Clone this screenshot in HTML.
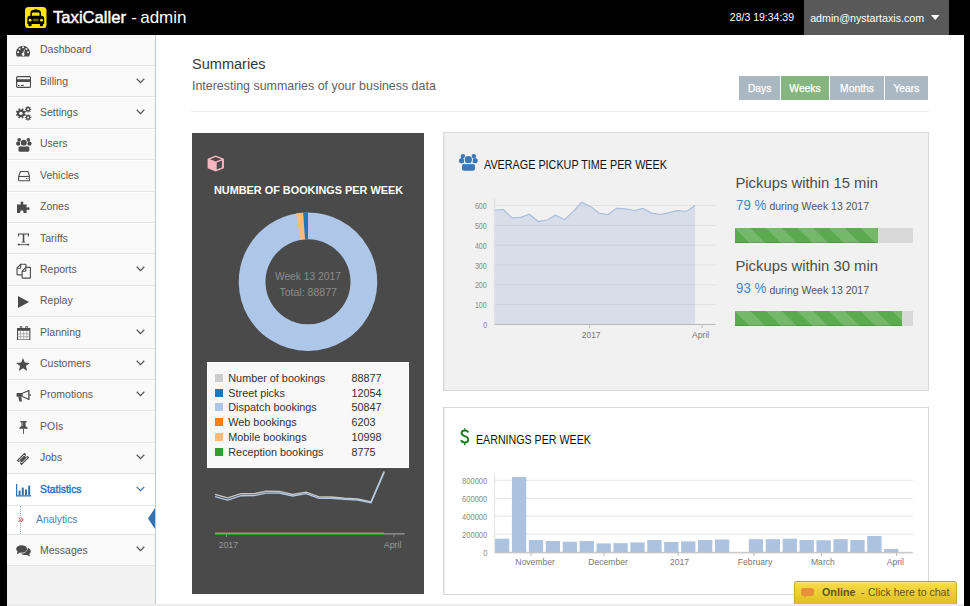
<!DOCTYPE html>
<html><head><meta charset="utf-8"><style>
html,body{margin:0;padding:0;}
body{width:970px;height:606px;overflow:hidden;position:relative;background:#000;font-family:"Liberation Sans",sans-serif;}
.t{position:absolute;line-height:1;white-space:nowrap;}
.r{position:absolute;display:block;}
</style></head><body>
<div class="r" style="left:0.00px;top:0.00px;width:970.00px;height:35.00px;background:#000;"></div>
<svg class="r" style="left:25.30px;top:6.50px;" width="21.50" height="21.40" viewBox="0 0 21.5 21.4"><rect x="0" y="0" width="21.5" height="21.4" rx="3.6" fill="#ffe800"/><path d="M5.4 9.2V6.2C5.4 3.8 7 2.9 9.4 2.8C9.8 2.2 11.7 2.2 12.1 2.8C14.5 2.9 16 3.8 16 6.2V9.2Z" fill="#000"/><path d="M6.9 8.9V6.6C6.9 5.8 7.6 5.4 8.4 5.4H13C13.8 5.4 14.5 5.8 14.5 6.6V8.9Z" fill="#ffe800"/><path d="M2.3 16.9V12C2.3 10 3.2 8.8 5 8.8H16.5C18.3 8.8 19.2 10 19.2 12V16.9Z" fill="#000"/><rect x="3.4" y="15.5" width="3.2" height="3.7" rx="1" fill="#000"/><rect x="14.9" y="15.5" width="3.2" height="3.7" rx="1" fill="#000"/><circle cx="5.1" cy="13.2" r="1.4" fill="#ffe800"/><circle cx="16.5" cy="13.2" r="1.4" fill="#ffe800"/><rect x="7.8" y="11.8" width="5.8" height="2.5" fill="#6e6200"/></svg>
<div class="t" style="left:53.30px;top:9.00px;font-size:17.00px;color:#fff;transform:scaleX(0.9781);transform-origin:0 0;-webkit-text-stroke:0.45px #fff;">TaxiCaller</div>
<div class="t" style="left:131.20px;top:9.00px;font-size:17.00px;color:#fff;">-</div>
<div class="t" style="left:140.20px;top:9.00px;font-size:17.00px;color:#fff;">admin</div>
<div class="t" style="left:729.80px;top:12.00px;font-size:10.50px;color:#fff;">28/3 19:34:39</div>
<div class="r" style="left:804.00px;top:0.00px;width:145.00px;height:35.00px;background:#595959;"></div>
<div class="t" style="left:810.20px;top:13.00px;font-size:10.67px;color:#fff;">admin@nystartaxis.com</div>
<svg class="r" style="left:931.00px;top:14.50px;" width="8.50" height="5.00" viewBox="0 0 8.5 5"><path d="M0 0H8.5L4.25 5z" fill="#fff"/></svg>
<div class="r" style="left:0.00px;top:35.00px;width:7.00px;height:571.00px;background:#000;"></div>
<div class="r" style="left:964.00px;top:35.00px;width:6.00px;height:571.00px;background:#000;"></div>
<div class="r" style="left:7.00px;top:35.00px;width:148.00px;height:569.00px;background:#f2f2f2;"></div>
<div class="r" style="left:155.00px;top:35.00px;width:1.20px;height:569.00px;background:#bfcad4;"></div>
<div class="r" style="left:7.00px;top:604.00px;width:957.00px;height:2.00px;background:#ececec;"></div>
<div class="r" style="left:156.20px;top:35.00px;width:807.80px;height:569.00px;background:#fff;"></div>
<div class="r" style="left:7.00px;top:35.00px;width:148.00px;height:31.10px;background:#f9f9f9;"></div>
<div class="t" style="left:40.00px;top:45.00px;font-size:10.00px;color:#595959;transform:scaleX(1.0490);transform-origin:0 0;">Dashboard</div>
<div class="r" style="left:7.00px;top:65.10px;width:148.00px;height:32.38px;background:#f9f9f9;"></div>
<div class="t" style="left:40.00px;top:77.00px;font-size:10.00px;color:#595959;transform:scaleX(1.0490);transform-origin:0 0;">Billing</div>
<svg class="r" style="left:136.00px;top:77.58px;" width="9.00" height="6.00" viewBox="0 0 9 6"><path d="M0.7 0.8L4.5 4.6L8.3 0.8" fill="none" stroke="#555" stroke-width="1.25"/></svg>
<div class="r" style="left:7.00px;top:96.48px;width:148.00px;height:32.38px;background:#f9f9f9;"></div>
<div class="t" style="left:40.00px;top:108.00px;font-size:10.00px;color:#595959;transform:scaleX(1.0490);transform-origin:0 0;">Settings</div>
<svg class="r" style="left:136.00px;top:108.96px;" width="9.00" height="6.00" viewBox="0 0 9 6"><path d="M0.7 0.8L4.5 4.6L8.3 0.8" fill="none" stroke="#555" stroke-width="1.25"/></svg>
<div class="r" style="left:7.00px;top:127.86px;width:148.00px;height:32.38px;background:#f9f9f9;"></div>
<div class="t" style="left:40.00px;top:139.00px;font-size:10.00px;color:#595959;transform:scaleX(1.0490);transform-origin:0 0;">Users</div>
<div class="r" style="left:7.00px;top:159.24px;width:148.00px;height:32.38px;background:#f9f9f9;"></div>
<div class="t" style="left:40.00px;top:171.00px;font-size:10.00px;color:#595959;transform:scaleX(1.0490);transform-origin:0 0;">Vehicles</div>
<div class="r" style="left:7.00px;top:190.62px;width:148.00px;height:32.38px;background:#f9f9f9;"></div>
<div class="t" style="left:40.00px;top:202.00px;font-size:10.00px;color:#595959;transform:scaleX(1.0490);transform-origin:0 0;">Zones</div>
<div class="r" style="left:7.00px;top:222.00px;width:148.00px;height:32.38px;background:#f9f9f9;"></div>
<div class="t" style="left:40.00px;top:234.00px;font-size:10.00px;color:#595959;transform:scaleX(1.0490);transform-origin:0 0;">Tariffs</div>
<div class="r" style="left:7.00px;top:253.38px;width:148.00px;height:32.38px;background:#f9f9f9;"></div>
<div class="t" style="left:40.00px;top:265.00px;font-size:10.00px;color:#595959;transform:scaleX(1.0490);transform-origin:0 0;">Reports</div>
<svg class="r" style="left:136.00px;top:265.86px;" width="9.00" height="6.00" viewBox="0 0 9 6"><path d="M0.7 0.8L4.5 4.6L8.3 0.8" fill="none" stroke="#555" stroke-width="1.25"/></svg>
<div class="r" style="left:7.00px;top:284.76px;width:148.00px;height:32.38px;background:#f9f9f9;"></div>
<div class="t" style="left:40.00px;top:296.00px;font-size:10.00px;color:#595959;transform:scaleX(1.0490);transform-origin:0 0;">Replay</div>
<div class="r" style="left:7.00px;top:316.14px;width:148.00px;height:32.38px;background:#f9f9f9;"></div>
<div class="t" style="left:40.00px;top:328.00px;font-size:10.00px;color:#595959;transform:scaleX(1.0490);transform-origin:0 0;">Planning</div>
<svg class="r" style="left:136.00px;top:328.62px;" width="9.00" height="6.00" viewBox="0 0 9 6"><path d="M0.7 0.8L4.5 4.6L8.3 0.8" fill="none" stroke="#555" stroke-width="1.25"/></svg>
<div class="r" style="left:7.00px;top:347.52px;width:148.00px;height:32.38px;background:#f9f9f9;"></div>
<div class="t" style="left:40.00px;top:359.00px;font-size:10.00px;color:#595959;transform:scaleX(1.0490);transform-origin:0 0;">Customers</div>
<svg class="r" style="left:136.00px;top:360.00px;" width="9.00" height="6.00" viewBox="0 0 9 6"><path d="M0.7 0.8L4.5 4.6L8.3 0.8" fill="none" stroke="#555" stroke-width="1.25"/></svg>
<div class="r" style="left:7.00px;top:378.90px;width:148.00px;height:32.38px;background:#f9f9f9;"></div>
<div class="t" style="left:40.00px;top:390.00px;font-size:10.00px;color:#595959;transform:scaleX(1.0490);transform-origin:0 0;">Promotions</div>
<svg class="r" style="left:136.00px;top:391.38px;" width="9.00" height="6.00" viewBox="0 0 9 6"><path d="M0.7 0.8L4.5 4.6L8.3 0.8" fill="none" stroke="#555" stroke-width="1.25"/></svg>
<div class="r" style="left:7.00px;top:410.28px;width:148.00px;height:32.38px;background:#f9f9f9;"></div>
<div class="t" style="left:40.00px;top:422.00px;font-size:10.00px;color:#595959;transform:scaleX(1.0490);transform-origin:0 0;">POIs</div>
<div class="r" style="left:7.00px;top:441.66px;width:148.00px;height:32.38px;background:#f9f9f9;"></div>
<div class="t" style="left:40.00px;top:453.00px;font-size:10.00px;color:#595959;transform:scaleX(1.0490);transform-origin:0 0;">Jobs</div>
<svg class="r" style="left:136.00px;top:454.14px;" width="9.00" height="6.00" viewBox="0 0 9 6"><path d="M0.7 0.8L4.5 4.6L8.3 0.8" fill="none" stroke="#555" stroke-width="1.25"/></svg>
<div class="r" style="left:7.00px;top:65.10px;width:148.00px;height:1.00px;background:#e4e4e4;"></div>
<div class="r" style="left:7.00px;top:66.10px;width:147.00px;height:1.00px;background:#ffffff;"></div>
<div class="r" style="left:7.00px;top:96.48px;width:148.00px;height:1.00px;background:#e4e4e4;"></div>
<div class="r" style="left:7.00px;top:97.48px;width:147.00px;height:1.00px;background:#ffffff;"></div>
<div class="r" style="left:7.00px;top:127.86px;width:148.00px;height:1.00px;background:#e4e4e4;"></div>
<div class="r" style="left:7.00px;top:128.86px;width:147.00px;height:1.00px;background:#ffffff;"></div>
<div class="r" style="left:7.00px;top:159.24px;width:148.00px;height:1.00px;background:#e4e4e4;"></div>
<div class="r" style="left:7.00px;top:160.24px;width:147.00px;height:1.00px;background:#ffffff;"></div>
<div class="r" style="left:7.00px;top:190.62px;width:148.00px;height:1.00px;background:#e4e4e4;"></div>
<div class="r" style="left:7.00px;top:191.62px;width:147.00px;height:1.00px;background:#ffffff;"></div>
<div class="r" style="left:7.00px;top:222.00px;width:148.00px;height:1.00px;background:#e4e4e4;"></div>
<div class="r" style="left:7.00px;top:223.00px;width:147.00px;height:1.00px;background:#ffffff;"></div>
<div class="r" style="left:7.00px;top:253.38px;width:148.00px;height:1.00px;background:#e4e4e4;"></div>
<div class="r" style="left:7.00px;top:254.38px;width:147.00px;height:1.00px;background:#ffffff;"></div>
<div class="r" style="left:7.00px;top:284.76px;width:148.00px;height:1.00px;background:#e4e4e4;"></div>
<div class="r" style="left:7.00px;top:285.76px;width:147.00px;height:1.00px;background:#ffffff;"></div>
<div class="r" style="left:7.00px;top:316.14px;width:148.00px;height:1.00px;background:#e4e4e4;"></div>
<div class="r" style="left:7.00px;top:317.14px;width:147.00px;height:1.00px;background:#ffffff;"></div>
<div class="r" style="left:7.00px;top:347.52px;width:148.00px;height:1.00px;background:#e4e4e4;"></div>
<div class="r" style="left:7.00px;top:348.52px;width:147.00px;height:1.00px;background:#ffffff;"></div>
<div class="r" style="left:7.00px;top:378.90px;width:148.00px;height:1.00px;background:#e4e4e4;"></div>
<div class="r" style="left:7.00px;top:379.90px;width:147.00px;height:1.00px;background:#ffffff;"></div>
<div class="r" style="left:7.00px;top:410.28px;width:148.00px;height:1.00px;background:#e4e4e4;"></div>
<div class="r" style="left:7.00px;top:411.28px;width:147.00px;height:1.00px;background:#ffffff;"></div>
<div class="r" style="left:7.00px;top:441.66px;width:148.00px;height:1.00px;background:#e4e4e4;"></div>
<div class="r" style="left:7.00px;top:442.66px;width:147.00px;height:1.00px;background:#ffffff;"></div>
<div class="r" style="left:7.00px;top:473.04px;width:148.00px;height:32.00px;background:#fff;"></div>
<div class="r" style="left:7.00px;top:473.04px;width:148.00px;height:1.00px;background:#e4e4e4;"></div>
<div class="r" style="left:7.00px;top:505.10px;width:148.00px;height:1.00px;background:#e8e8e8;"></div>
<div class="t" style="left:39.60px;top:485.00px;font-size:10.40px;color:#2f72b8;transform:scaleX(0.9998);transform-origin:0 0;-webkit-text-stroke:0.4px #2f72b8;">Statistics</div>
<svg class="r" style="left:136.00px;top:486.20px;" width="9.00" height="6.00" viewBox="0 0 9 6"><path d="M0.7 0.8L4.5 4.6L8.3 0.8" fill="none" stroke="#2f72b8" stroke-width="1.2"/></svg>
<div class="r" style="left:7.00px;top:506.10px;width:148.00px;height:28.00px;background:#fff;"></div>
<div class="r" style="left:7.00px;top:534.00px;width:148.00px;height:1.00px;background:#e4e4e4;"></div>
<div class="t" style="left:35.50px;top:515.00px;font-size:10.00px;color:#4f7fc0;transform:scaleX(1.0370);transform-origin:0 0;">Analytics</div>
<div class="t" style="left:17.60px;top:514.00px;font-size:11.00px;color:#d0524a;transform:scaleX(0.9808);transform-origin:0 0;-webkit-text-stroke:0.2px #d0524a;">&raquo;</div>
<div class="r" style="left:20.00px;top:506.00px;width:0.00px;height:28.00px;background:transparent;border-left:1px dotted #9fb3c8;"></div>
<svg class="r" style="left:147.90px;top:508.30px;" width="7.00" height="21.00" viewBox="0 0 7 21"><path d="M7 0V21L0 10.5z" fill="#2f72b8"/></svg>
<div class="r" style="left:7.00px;top:535.00px;width:148.00px;height:30.30px;background:#f9f9f9;"></div>
<div class="r" style="left:7.00px;top:565.30px;width:148.00px;height:1.00px;background:#e4e4e4;"></div>
<div class="t" style="left:40.00px;top:546.00px;font-size:10.00px;color:#595959;transform:scaleX(1.0490);transform-origin:0 0;">Messages</div>
<svg class="r" style="left:136.00px;top:546.40px;" width="9.00" height="6.00" viewBox="0 0 9 6"><path d="M0.7 0.8L4.5 4.6L8.3 0.8" fill="none" stroke="#555" stroke-width="1.25"/></svg>
<svg class="r" style="left:16.30px;top:45.30px;" width="14.00" height="12.00" viewBox="0 0 14 12"><path d="M0.9 11.4A7.05 7.05 0 1 1 13.1 11.4Z" fill="#4b4b4b"/><g fill="#f9f9f9"><circle cx="7.1" cy="2.3" r="0.95"/><circle cx="3.6" cy="3.9" r="0.95"/><circle cx="10.5" cy="3.9" r="0.95"/><circle cx="2.1" cy="7.2" r="0.95"/><circle cx="12" cy="7.2" r="0.95"/><path d="M9.2 3L7.9 9.3L6.3 9.1Z"/><circle cx="7.1" cy="9.5" r="1.4"/></g></svg>
<svg class="r" style="left:16.00px;top:76.00px;" width="15.20" height="12.00" viewBox="0 0 15.2 12"><rect x="0.6" y="0.6" width="14" height="10.8" rx="1.3" fill="none" stroke="#4b4b4b" stroke-width="1.2"/><rect x="0.6" y="3.2" width="14" height="2.8" fill="#4b4b4b"/><rect x="2" y="8.9" width="1.5" height="1.1" fill="#4b4b4b"/><rect x="5" y="8.9" width="2.8" height="1.1" fill="#4b4b4b"/></svg>
<svg class="r" style="left:16.00px;top:106.00px;" width="16.00" height="15.00" viewBox="0 0 16 15"><g fill="#4b4b4b"><circle cx="4.90" cy="7.35" r="3.70"/><rect x="4.05" y="2.25" width="1.70" height="5.10" transform="rotate(22.5 4.90 7.35)"/><rect x="4.05" y="2.25" width="1.70" height="5.10" transform="rotate(67.5 4.90 7.35)"/><rect x="4.05" y="2.25" width="1.70" height="5.10" transform="rotate(112.5 4.90 7.35)"/><rect x="4.05" y="2.25" width="1.70" height="5.10" transform="rotate(157.5 4.90 7.35)"/><rect x="4.05" y="2.25" width="1.70" height="5.10" transform="rotate(202.5 4.90 7.35)"/><rect x="4.05" y="2.25" width="1.70" height="5.10" transform="rotate(247.5 4.90 7.35)"/><rect x="4.05" y="2.25" width="1.70" height="5.10" transform="rotate(292.5 4.90 7.35)"/><rect x="4.05" y="2.25" width="1.70" height="5.10" transform="rotate(337.5 4.90 7.35)"/><circle cx="12.10" cy="3.30" r="2.20"/><rect x="11.55" y="0.10" width="1.10" height="3.20" transform="rotate(0.0 12.10 3.30)"/><rect x="11.55" y="0.10" width="1.10" height="3.20" transform="rotate(45.0 12.10 3.30)"/><rect x="11.55" y="0.10" width="1.10" height="3.20" transform="rotate(90.0 12.10 3.30)"/><rect x="11.55" y="0.10" width="1.10" height="3.20" transform="rotate(135.0 12.10 3.30)"/><rect x="11.55" y="0.10" width="1.10" height="3.20" transform="rotate(180.0 12.10 3.30)"/><rect x="11.55" y="0.10" width="1.10" height="3.20" transform="rotate(225.0 12.10 3.30)"/><rect x="11.55" y="0.10" width="1.10" height="3.20" transform="rotate(270.0 12.10 3.30)"/><rect x="11.55" y="0.10" width="1.10" height="3.20" transform="rotate(315.0 12.10 3.30)"/><circle cx="12.10" cy="11.40" r="2.20"/><rect x="11.55" y="8.20" width="1.10" height="3.20" transform="rotate(0.0 12.10 11.40)"/><rect x="11.55" y="8.20" width="1.10" height="3.20" transform="rotate(45.0 12.10 11.40)"/><rect x="11.55" y="8.20" width="1.10" height="3.20" transform="rotate(90.0 12.10 11.40)"/><rect x="11.55" y="8.20" width="1.10" height="3.20" transform="rotate(135.0 12.10 11.40)"/><rect x="11.55" y="8.20" width="1.10" height="3.20" transform="rotate(180.0 12.10 11.40)"/><rect x="11.55" y="8.20" width="1.10" height="3.20" transform="rotate(225.0 12.10 11.40)"/><rect x="11.55" y="8.20" width="1.10" height="3.20" transform="rotate(270.0 12.10 11.40)"/><rect x="11.55" y="8.20" width="1.10" height="3.20" transform="rotate(315.0 12.10 11.40)"/></g><circle cx="4.9" cy="7.35" r="1.7" fill="#f9f9f9"/><circle cx="12.1" cy="3.3" r="1" fill="#f9f9f9"/><circle cx="12.1" cy="11.4" r="1" fill="#f9f9f9"/></svg>
<svg class="r" style="left:15.70px;top:138.00px;" width="16.00" height="14.00" viewBox="0 0 16 14"><g fill="#4b4b4b"><circle cx="3.3" cy="1.9" r="1.9"/><circle cx="12.3" cy="1.9" r="1.9"/><circle cx="2.2" cy="5.6" r="2.2"/><circle cx="13.4" cy="5.6" r="2.2"/><rect x="2.5" y="8.1" width="10.8" height="5.7" rx="1.6"/></g><circle cx="7.8" cy="4.7" r="3.7" fill="#f9f9f9"/><circle cx="7.8" cy="4.7" r="3" fill="#4b4b4b"/><path d="M2.5 8.1H13.3" stroke="#f9f9f9" stroke-width="0.6"/></svg>
<svg class="r" style="left:17.60px;top:171.00px;" width="12.50" height="11.00" viewBox="0 0 12.5 11"><path d="M0.6 5.6L2.1 1.2C2.3 0.7 2.7 0.5 3.2 0.5H9.1C9.6 0.5 10 0.7 10.2 1.2L11.7 5.6V9C11.7 9.5 11.3 9.8 10.8 9.8H1.5C1 9.8 0.6 9.5 0.6 9Z" fill="none" stroke="#4b4b4b" stroke-width="1.1"/><path d="M0.6 5.5H11.7" stroke="#4b4b4b" stroke-width="1.1"/><rect x="7.9" y="7" width="1" height="1" fill="#4b4b4b"/><rect x="9.5" y="7" width="1" height="1" fill="#4b4b4b"/></svg>
<svg class="r" style="left:17.00px;top:200.50px;" width="13.50" height="12.50" viewBox="0 0 13.5 12.5"><path d="M0 3.5H3.8V2.2A1.3 1.3 0 1 1 6.2 2.2V3.5H9.6V6.4H10.8A1.3 1.3 0 1 1 10.8 8.8H9.6V12.3H6.6V11A1.6 1.6 0 1 0 3.2 11V12.3H0Z" fill="#4b4b4b"/></svg>
<svg class="r" style="left:17.00px;top:233.00px;" width="13.00" height="13.00" viewBox="0 0 13 13"><path d="M1 0.5H12V3.4H11.2L10.7 1.6H7.3V8.6L8.5 9.1V9.6H4.5V9.1L5.7 8.6V1.6H2.3L1.8 3.4H1Z" fill="#4b4b4b"/><path d="M1.2 11.6H11.8" stroke="#4b4b4b" stroke-width="0.9"/><path d="M0.3 11.6L2.3 10.3V12.9Z" fill="#4b4b4b"/><path d="M12.7 11.6L10.7 10.3V12.9Z" fill="#4b4b4b"/></svg>
<svg class="r" style="left:16.00px;top:262.50px;" width="15.00" height="16.00" viewBox="0 0 15 16"><path d="M1 5.2L4.7 1.2H9.4C9.8 1.2 10 1.4 10 1.8V11.2C10 11.6 9.8 11.9 9.4 11.9H1.6C1.2 11.9 1 11.6 1 11.2Z" fill="#f9f9f9" stroke="#4b4b4b" stroke-width="1.1" stroke-linejoin="round"/><path d="M1 5.2H3.9C4.4 5.2 4.7 4.9 4.7 4.4V1.2" fill="none" stroke="#4b4b4b" stroke-width="1.1" stroke-linejoin="round"/><path d="M6.1 8.3L9.8 4.4H13.8C14.2 4.4 14.4 4.6 14.4 5V14.4C14.4 14.8 14.2 15.1 13.8 15.1H6.7C6.3 15.1 6.1 14.8 6.1 14.4Z" fill="#f9f9f9" stroke="#4b4b4b" stroke-width="1.1" stroke-linejoin="round"/><path d="M6.1 8.3H9C9.5 8.3 9.8 8 9.8 7.5V4.4" fill="none" stroke="#4b4b4b" stroke-width="1.1" stroke-linejoin="round"/></svg>
<svg class="r" style="left:18.00px;top:295.80px;" width="11.00" height="12.00" viewBox="0 0 11 12"><path d="M0 0V12L11 6z" fill="#4b4b4b"/></svg>
<svg class="r" style="left:17.00px;top:325.80px;" width="13.50" height="14.50" viewBox="0 0 13.5 14.5"><rect x="0.55" y="2.55" width="12.3" height="11.4" fill="none" stroke="#4b4b4b" stroke-width="1.1"/><rect x="0.5" y="2.3" width="12.4" height="2.5" fill="#4b4b4b"/><path d="M3.3 3.8V0.6H4.9V3.8M8.8 3.8V0.6H10.4V3.8" fill="none" stroke="#4b4b4b" stroke-width="0.9"/><path d="M3.55 4.8V13.5M6.7 4.8V13.5M9.85 4.8V13.5M0.6 7.8H12.8M0.6 10.7H12.8" stroke="#8a8a8a" stroke-width="0.6"/></svg>
<svg class="r" style="left:16.00px;top:357.50px;" width="14.00" height="13.50" viewBox="0 0 14 13.5"><path d="M7 0L8.8 4.6L13.8 4.9L9.9 8.1L11.2 13L7 10.3L2.8 13L4.1 8.1L0.2 4.9L5.2 4.6Z" fill="#4b4b4b"/></svg>
<svg class="r" style="left:16.00px;top:390.00px;" width="15.00" height="12.00" viewBox="0 0 15 12"><path d="M0.6 3H5.8L12.6 0.1H13.5V10.1H12.6L5.8 6.8H0.6Z" fill="#4b4b4b"/><path d="M6.6 3.8L12.2 1.6V8.6L6.6 6Z" fill="#f9f9f9"/><path d="M2.3 6.7H5.3L5.9 11.4H3.4Z" fill="#4b4b4b"/><rect x="13.3" y="4.1" width="1.4" height="1.8" fill="#4b4b4b"/></svg>
<svg class="r" style="left:19.30px;top:420.50px;" width="9.00" height="13.00" viewBox="0 0 9 13"><path d="M1.3 0H7.7V1.3H6.6V5.2C7.8 5.7 8.8 6.6 8.8 7.8H0.2C0.2 6.6 1.2 5.7 2.4 5.2V1.3H1.3Z" fill="#4b4b4b"/><rect x="4.1" y="7.8" width="0.9" height="5" fill="#4b4b4b"/><rect x="3.2" y="1.3" width="1" height="3.8" fill="#9a9a9a"/></svg>
<svg class="r" style="left:16.30px;top:452.00px;" width="14.00" height="14.00" viewBox="0 0 14 14"><g transform="rotate(-45 7 7)"><rect x="1.5" y="3.6" width="11" height="6.8" fill="#4b4b4b"/><circle cx="1.5" cy="7" r="1.3" fill="#f9f9f9"/><circle cx="12.5" cy="7" r="1.3" fill="#f9f9f9"/><rect x="3.3" y="5.05" width="7.4" height="3.9" fill="none" stroke="#f9f9f9" stroke-width="0.8"/></g></svg>
<svg class="r" style="left:15.50px;top:484.00px;" width="15.00" height="12.50" viewBox="0 0 15 12.5"><path d="M0.6 0V11.9H15" fill="none" stroke="#2f72b8" stroke-width="1.2"/><rect x="2.6" y="6.6" width="2" height="4.7" fill="#2f72b8"/><rect x="5.8" y="3.6" width="2" height="7.7" fill="#2f72b8"/><rect x="9" y="5.4" width="2" height="5.9" fill="#2f72b8"/><rect x="12.2" y="1.6" width="2" height="9.7" fill="#2f72b8"/></svg>
<svg class="r" style="left:16.20px;top:545.00px;" width="15.00" height="12.00" viewBox="0 0 15 12"><ellipse cx="5.6" cy="4" rx="5.4" ry="3.8" fill="#4b4b4b"/><path d="M1.5 6.5L0.8 9.3L4.3 7.4Z" fill="#4b4b4b"/><path d="M11.8 2.8C13.7 3.6 14.8 4.8 14.8 6.2C14.8 7.3 14.2 8.2 13.2 8.9L14 11.6L10.8 9.9C9.9 10.1 9.1 10.1 8.2 10C6.8 9.8 5.7 9.3 4.9 8.6C8.6 8.6 11.8 6.3 11.8 2.8Z" fill="#4b4b4b"/></svg>
<div class="t" style="left:191.80px;top:57.00px;font-size:14.70px;color:#383838;transform:scaleX(0.9901);transform-origin:0 0;">Summaries</div>
<div class="t" style="left:191.90px;top:81.00px;font-size:11.90px;color:#626262;transform:scaleX(1.0450);transform-origin:0 0;">Interesting summaries of your business data</div>
<div class="r" style="left:191.00px;top:111.00px;width:737.50px;height:1.00px;background:#eeeeee;"></div>
<div class="r" style="left:739.30px;top:76.00px;width:40.70px;height:24.00px;background:#a9b8c2;"></div>
<div class="t" style="left:759.65px;top:84.00px;font-size:10.30px;color:#fff;width:200px;margin-left:-100px;text-align:center;-webkit-text-stroke:0.25px #fff;">Days</div>
<div class="r" style="left:781.00px;top:76.00px;width:48.00px;height:24.00px;background:#85b680;"></div>
<div class="t" style="left:805.00px;top:84.00px;font-size:10.30px;color:#fff;width:200px;margin-left:-100px;text-align:center;-webkit-text-stroke:0.25px #fff;">Weeks</div>
<div class="r" style="left:830.00px;top:76.00px;width:54.00px;height:24.00px;background:#a9b8c2;"></div>
<div class="t" style="left:857.00px;top:84.00px;font-size:10.30px;color:#fff;width:200px;margin-left:-100px;text-align:center;-webkit-text-stroke:0.25px #fff;">Months</div>
<div class="r" style="left:885.00px;top:76.00px;width:42.80px;height:24.00px;background:#a9b8c2;"></div>
<div class="t" style="left:906.40px;top:84.00px;font-size:10.30px;color:#fff;width:200px;margin-left:-100px;text-align:center;-webkit-text-stroke:0.25px #fff;">Years</div>
<div class="r" style="left:192.30px;top:132.70px;width:231.70px;height:461.30px;background:#4a4a4a;"></div>
<svg class="r" style="left:206.80px;top:154.70px;" width="17.50" height="17.00" viewBox="0 0 17.5 17"><path d="M8.7 0.6L16.9 3.7V13.2L8.7 16.4L0.6 13.2V3.7Z" fill="#f6b7c3"/><path d="M3.0 4.3L8.7 2.0L14.4 4.3L8.7 6.6Z" fill="#4a4a4a"/><path d="M9.7 7.6L14.9 5.5V12.5L9.7 14.5Z" fill="#4a4a4a"/></svg>
<div class="t" style="left:213.80px;top:185.00px;font-size:11.50px;color:#fff;transform:scaleX(0.9451);transform-origin:0 0;font-weight:bold;">NUMBER OF BOOKINGS PER WEEK</div>
<svg class="r" style="left:0;top:0" width="970" height="606" viewBox="0 0 970 606"><path d="M308.000 225.875a55.875 55.875 0 1 0 0.001 0z" fill="none" stroke="#aec7e8" stroke-width="26.750"/><path d="M295.975 213.552A69.250 69.250 0 0 1 303.169 212.669L305.035 239.354A42.500 42.500 0 0 0 300.620 239.896Z" fill="#ffbb78"/><path d="M303.169 212.669A69.250 69.250 0 0 1 308.000 212.500L308.000 239.250A42.500 42.500 0 0 0 305.035 239.354Z" fill="#1f77b4"/></svg>
<div class="t" style="left:307.90px;top:272.00px;font-size:10.26px;color:#8c8c8c;width:200px;margin-left:-100px;text-align:center;">Week 13 2017</div>
<div class="t" style="left:308.15px;top:287.00px;font-size:10.55px;color:#8c8c8c;width:200px;margin-left:-100px;text-align:center;">Total: 88877</div>
<div class="r" style="left:206.80px;top:361.80px;width:202.30px;height:105.90px;background:#f8f8f8;box-sizing:border-box;border:1px solid #fff;"></div>
<div class="r" style="left:215.00px;top:373.80px;width:8.00px;height:8.00px;background:#cccccc;"></div>
<div class="t" style="left:228.30px;top:373.00px;font-size:10.84px;color:#333;">Number of bookings</div>
<div class="t" style="left:351.50px;top:373.00px;font-size:10.84px;color:#333;">88877</div>
<div class="r" style="left:215.00px;top:388.62px;width:8.00px;height:8.00px;background:#1f77b4;"></div>
<div class="t" style="left:228.30px;top:388.00px;font-size:10.84px;color:#333;">Street picks</div>
<div class="t" style="left:351.50px;top:388.00px;font-size:10.84px;color:#333;">12054</div>
<div class="r" style="left:215.00px;top:403.44px;width:8.00px;height:8.00px;background:#aec7e8;"></div>
<div class="t" style="left:228.30px;top:402.00px;font-size:10.84px;color:#333;">Dispatch bookings</div>
<div class="t" style="left:351.50px;top:402.00px;font-size:10.84px;color:#333;">50847</div>
<div class="r" style="left:215.00px;top:418.26px;width:8.00px;height:8.00px;background:#ff7f0e;"></div>
<div class="t" style="left:228.30px;top:417.00px;font-size:10.84px;color:#333;">Web bookings</div>
<div class="t" style="left:351.50px;top:417.00px;font-size:10.84px;color:#333;">6203</div>
<div class="r" style="left:215.00px;top:433.08px;width:8.00px;height:8.00px;background:#ffbb78;"></div>
<div class="t" style="left:228.30px;top:432.00px;font-size:10.84px;color:#333;">Mobile bookings</div>
<div class="t" style="left:351.50px;top:432.00px;font-size:10.84px;color:#333;">10998</div>
<div class="r" style="left:215.00px;top:447.90px;width:8.00px;height:8.00px;background:#2ca02c;"></div>
<div class="t" style="left:228.30px;top:447.00px;font-size:10.84px;color:#333;">Reception bookings</div>
<div class="t" style="left:351.50px;top:447.00px;font-size:10.84px;color:#333;">8775</div>
<svg class="r" style="left:0;top:0" width="970" height="606" viewBox="0 0 970 606"><polyline points="215.0,494.3 227.7,497.9 241.0,493.7 254.2,493.7 266.2,491.3 279.5,491.4 292.7,494.5 306.0,492.1 319.2,496.9 331.3,497.0 344.5,498.2 357.8,499.0 371.0,501.9 384.2,471.4" fill="none" stroke="#c4c4c4" stroke-width="1.4" stroke-linejoin="round"/><polyline points="215.0,496.6 227.7,500.1 241.0,495.7 254.2,495.6 266.2,493.1 279.5,493.0 292.7,496.0 306.0,493.6 319.2,498.3 331.3,498.2 344.5,499.3 357.8,500.0 371.0,502.7 384.2,472.1" fill="none" stroke="#aec7e8" stroke-width="1.4" stroke-linejoin="round"/><path d="M215 533.8H404.7" stroke="#9a9a9a" stroke-width="1.2"/><path d="M215 533.2H384" stroke="#ffbb78" stroke-width="1"/><path d="M215 534.2H384" stroke="#2ca02c" stroke-width="1.5"/><path d="M226.5 534V537M393.9 534V537" stroke="#8a8a8a" stroke-width="1"/></svg>
<div class="t" style="left:218.80px;top:541.00px;font-size:8.60px;color:#9a9a9a;">2017</div>
<div class="t" style="left:383.80px;top:541.00px;font-size:8.80px;color:#9a9a9a;">April</div>
<div class="r" style="left:443.00px;top:132.00px;width:486.00px;height:259.00px;background:#f1f1f1;box-sizing:border-box;border:1px solid #d9d9d9;box-shadow:inset 1px 0 0 #e6e6e6;"></div>
<svg class="r" style="left:459.00px;top:153.80px;" width="19.20" height="17.20" viewBox="0 0 16 14.33"><g fill="#3a78b7"><circle cx="3.3" cy="1.9" r="1.9"/><circle cx="12.3" cy="1.9" r="1.9"/><circle cx="2.2" cy="5.6" r="2.2"/><circle cx="13.4" cy="5.6" r="2.2"/><rect x="2.5" y="8.1" width="10.8" height="5.9" rx="1.6"/></g><circle cx="7.8" cy="4.7" r="3.7" fill="#f1f1f1"/><circle cx="7.8" cy="4.7" r="3" fill="#3a78b7"/><path d="M2.5 8.1H13.3" stroke="#f1f1f1" stroke-width="0.6"/></svg>
<div class="t" style="left:483.90px;top:159.00px;font-size:12.30px;color:#111;transform:scaleX(0.8778);transform-origin:0 0;">AVERAGE PICKUP TIME PER WEEK</div>
<svg class="r" style="left:0;top:0" width="970" height="606" viewBox="0 0 970 606"><polygon points="494.6,324 494.60,210.20 503.32,209.50 512.03,217.90 520.75,217.40 529.47,214.20 538.19,221.50 546.90,220.00 555.62,215.30 564.34,219.60 573.06,211.60 581.77,202.30 590.49,206.40 599.21,213.30 607.93,214.50 616.64,208.30 625.36,208.80 634.08,210.50 642.80,208.30 651.51,213.10 660.23,214.50 668.95,212.70 677.67,210.60 686.38,211.40 695.10,205.40 695.1,324" fill="#d8dee9"/><path d="M494.6 205.60H716" stroke="rgba(0,0,0,0.065)" stroke-width="1"/><path d="M494.6 225.40H716" stroke="rgba(0,0,0,0.065)" stroke-width="1"/><path d="M494.6 245.20H716" stroke="rgba(0,0,0,0.065)" stroke-width="1"/><path d="M494.6 265.00H716" stroke="rgba(0,0,0,0.065)" stroke-width="1"/><path d="M494.6 284.80H716" stroke="rgba(0,0,0,0.065)" stroke-width="1"/><path d="M494.6 304.60H716" stroke="rgba(0,0,0,0.065)" stroke-width="1"/><path d="M494.6 324.40H716" stroke="rgba(0,0,0,0.065)" stroke-width="1"/><polyline points="494.60,210.20 503.32,209.50 512.03,217.90 520.75,217.40 529.47,214.20 538.19,221.50 546.90,220.00 555.62,215.30 564.34,219.60 573.06,211.60 581.77,202.30 590.49,206.40 599.21,213.30 607.93,214.50 616.64,208.30 625.36,208.80 634.08,210.50 642.80,208.30 651.51,213.10 660.23,214.50 668.95,212.70 677.67,210.60 686.38,211.40 695.10,205.40" fill="none" stroke="#a8bedb" stroke-width="1.2"/><path d="M494.6 198.7V324" stroke="#e0e0e0" stroke-width="1.2"/><path d="M494.6 324.5H715.5" stroke="#b8b8b8" stroke-width="1"/><path d="M589.7 324.5V328M702.1 324.5V328" stroke="#b8b8b8" stroke-width="1"/></svg>
<div class="t" style="left:474.12px;top:203.00px;font-size:8.20px;color:#8a8a8a;transform:scaleX(0.8700);transform-origin:100%% 0;">600</div>
<div class="t" style="left:474.12px;top:223.00px;font-size:8.20px;color:#8a8a8a;transform:scaleX(0.8700);transform-origin:100%% 0;">500</div>
<div class="t" style="left:474.12px;top:243.00px;font-size:8.20px;color:#8a8a8a;transform:scaleX(0.8700);transform-origin:100%% 0;">400</div>
<div class="t" style="left:474.12px;top:263.00px;font-size:8.20px;color:#8a8a8a;transform:scaleX(0.8700);transform-origin:100%% 0;">300</div>
<div class="t" style="left:474.12px;top:282.00px;font-size:8.20px;color:#8a8a8a;transform:scaleX(0.8700);transform-origin:100%% 0;">200</div>
<div class="t" style="left:474.12px;top:302.00px;font-size:8.20px;color:#8a8a8a;transform:scaleX(0.8700);transform-origin:100%% 0;">100</div>
<div class="t" style="left:483.24px;top:322.00px;font-size:8.20px;color:#8a8a8a;transform:scaleX(0.8700);transform-origin:100%% 0;">0</div>
<div class="t" style="left:591.20px;top:331.00px;font-size:8.40px;color:#777;width:200px;margin-left:-100px;text-align:center;">2017</div>
<div class="t" style="left:700.70px;top:331.00px;font-size:8.60px;color:#777;width:200px;margin-left:-100px;text-align:center;">April</div>
<div class="t" style="left:735.40px;top:176.00px;font-size:14.83px;color:#4d4d4d;">Pickups within 15 min</div>
<div class="t" style="left:735.50px;top:198.00px;font-size:14.40px;color:#4a86c8;transform:scaleX(0.9232);transform-origin:0 0;">79 %</div>
<div class="t" style="left:769.40px;top:201.00px;font-size:10.50px;color:#555;">during Week 13 2017</div>
<div class="r" style="left:734.90px;top:228.30px;width:178.00px;height:14.30px;background:#d9d9d9;"></div>
<div class="r" style="left:734.90px;top:228.30px;width:143.10px;height:14.30px;background:#5aaa4e;background-image:linear-gradient(45deg,rgba(255,255,255,.16) 25%,transparent 25%,transparent 50%,rgba(255,255,255,.16) 50%,rgba(255,255,255,.16) 75%,transparent 75%,transparent);background-size:31.5px 31.5px;box-shadow:inset 0 -1px 0 rgba(0,0,0,.12);"></div>
<div class="t" style="left:735.40px;top:259.00px;font-size:14.83px;color:#4d4d4d;">Pickups within 30 min</div>
<div class="t" style="left:735.50px;top:281.00px;font-size:14.40px;color:#4a86c8;transform:scaleX(0.9232);transform-origin:0 0;">93 %</div>
<div class="t" style="left:769.40px;top:285.00px;font-size:10.50px;color:#555;">during Week 13 2017</div>
<div class="r" style="left:734.90px;top:311.30px;width:178.00px;height:14.30px;background:#d9d9d9;"></div>
<div class="r" style="left:734.90px;top:311.30px;width:167.20px;height:14.30px;background:#5aaa4e;background-image:linear-gradient(45deg,rgba(255,255,255,.16) 25%,transparent 25%,transparent 50%,rgba(255,255,255,.16) 50%,rgba(255,255,255,.16) 75%,transparent 75%,transparent);background-size:31.5px 31.5px;box-shadow:inset 0 -1px 0 rgba(0,0,0,.12);"></div>
<div class="r" style="left:443.00px;top:407.00px;width:486.00px;height:188.00px;background:#fff;box-sizing:border-box;border:1px solid #d9d9d9;box-shadow:inset 1px 0 0 #ececec;"></div>
<svg class="r" style="left:459.80px;top:428.30px;" width="9.60" height="17.50" viewBox="0 0 10 18"><path d="M5 0.2V3M5 14.6V17.8" stroke="#1f7f1f" stroke-width="1.5"/><path d="M8.6 4.6C8.1 3.1 6.9 2.5 5 2.5C3 2.5 1.6 3.6 1.6 5.3C1.6 7.1 3.1 7.7 5 8.4C7 9.1 8.6 9.8 8.6 11.9C8.6 13.9 7 15 5 15C3 15 1.6 14.1 1.2 12.4" fill="none" stroke="#1f7f1f" stroke-width="2"/></svg>
<div class="t" style="left:475.70px;top:434.00px;font-size:12.20px;color:#111;transform:scaleX(0.8744);transform-origin:0 0;">EARNINGS PER WEEK</div>
<svg class="r" style="left:0;top:0" width="970" height="606" viewBox="0 0 970 606"><path d="M494.5 480.30H913" stroke="#e6e6e6" stroke-width="1"/><path d="M494.5 498.25H913" stroke="#e6e6e6" stroke-width="1"/><path d="M494.5 516.20H913" stroke="#e6e6e6" stroke-width="1"/><path d="M494.5 534.15H913" stroke="#e6e6e6" stroke-width="1"/><path d="M494.5 552.10H913" stroke="#e6e6e6" stroke-width="1"/><rect x="495.00" y="538.70" width="14.3" height="13.60" fill="#adc2de"/><rect x="511.92" y="476.90" width="14.3" height="75.40" fill="#adc2de"/><rect x="528.84" y="540.00" width="14.3" height="12.30" fill="#adc2de"/><rect x="545.76" y="541.00" width="14.3" height="11.30" fill="#adc2de"/><rect x="562.68" y="541.70" width="14.3" height="10.60" fill="#adc2de"/><rect x="579.60" y="541.00" width="14.3" height="11.30" fill="#adc2de"/><rect x="596.52" y="543.40" width="14.3" height="8.90" fill="#adc2de"/><rect x="613.44" y="543.20" width="14.3" height="9.10" fill="#adc2de"/><rect x="630.36" y="542.40" width="14.3" height="9.90" fill="#adc2de"/><rect x="647.28" y="540.00" width="14.3" height="12.30" fill="#adc2de"/><rect x="664.20" y="542.00" width="14.3" height="10.30" fill="#adc2de"/><rect x="681.12" y="541.40" width="14.3" height="10.90" fill="#adc2de"/><rect x="698.04" y="540.00" width="14.3" height="12.30" fill="#adc2de"/><rect x="714.96" y="539.50" width="14.3" height="12.80" fill="#adc2de"/><rect x="748.80" y="539.20" width="14.3" height="13.10" fill="#adc2de"/><rect x="765.72" y="539.20" width="14.3" height="13.10" fill="#adc2de"/><rect x="782.64" y="538.70" width="14.3" height="13.60" fill="#adc2de"/><rect x="799.56" y="540.00" width="14.3" height="12.30" fill="#adc2de"/><rect x="816.48" y="540.30" width="14.3" height="12.00" fill="#adc2de"/><rect x="833.40" y="539.20" width="14.3" height="13.10" fill="#adc2de"/><rect x="850.32" y="540.00" width="14.3" height="12.30" fill="#adc2de"/><rect x="867.24" y="536.00" width="14.3" height="16.30" fill="#adc2de"/><rect x="884.16" y="548.90" width="14.3" height="3.40" fill="#adc2de"/><path d="M494.5 473.7V552.3" stroke="#e6e6e6" stroke-width="1.3"/><path d="M494.5 552.8H912.7" stroke="#b8b8b8" stroke-width="1"/><path d="M531.1 552.8V556" stroke="#b8b8b8" stroke-width="1"/><path d="M603.9 552.8V556" stroke="#b8b8b8" stroke-width="1"/><path d="M678.1 552.8V556" stroke="#b8b8b8" stroke-width="1"/><path d="M753.9 552.8V556" stroke="#b8b8b8" stroke-width="1"/><path d="M821.4 552.8V556" stroke="#b8b8b8" stroke-width="1"/><path d="M896.6 552.8V556" stroke="#b8b8b8" stroke-width="1"/></svg>
<div class="t" style="left:460.64px;top:478.00px;font-size:8.20px;color:#8a8a8a;transform:scaleX(0.9200);transform-origin:100%% 0;">800000</div>
<div class="t" style="left:460.64px;top:496.00px;font-size:8.20px;color:#8a8a8a;transform:scaleX(0.9200);transform-origin:100%% 0;">600000</div>
<div class="t" style="left:460.64px;top:514.00px;font-size:8.20px;color:#8a8a8a;transform:scaleX(0.9200);transform-origin:100%% 0;">400000</div>
<div class="t" style="left:460.64px;top:532.00px;font-size:8.20px;color:#8a8a8a;transform:scaleX(0.9200);transform-origin:100%% 0;">200000</div>
<div class="t" style="left:483.44px;top:550.00px;font-size:8.20px;color:#8a8a8a;transform:scaleX(0.9200);transform-origin:100%% 0;">0</div>
<div class="t" style="left:535.05px;top:558.00px;font-size:8.60px;color:#777;width:200px;margin-left:-100px;text-align:center;">November</div>
<div class="t" style="left:608.00px;top:558.00px;font-size:8.60px;color:#777;width:200px;margin-left:-100px;text-align:center;">December</div>
<div class="t" style="left:679.50px;top:558.00px;font-size:8.60px;color:#777;width:200px;margin-left:-100px;text-align:center;">2017</div>
<div class="t" style="left:755.05px;top:558.00px;font-size:8.60px;color:#777;width:200px;margin-left:-100px;text-align:center;">February</div>
<div class="t" style="left:822.90px;top:558.00px;font-size:8.60px;color:#777;width:200px;margin-left:-100px;text-align:center;">March</div>
<div class="t" style="left:895.30px;top:558.00px;font-size:8.60px;color:#777;width:200px;margin-left:-100px;text-align:center;">April</div>
<div class="r" style="left:793.90px;top:581.10px;width:162.90px;height:23.00px;background:#f0d038;box-sizing:border-box;border:1px solid #c9ab2c;border-top-color:#a49660;border-bottom:none;border-radius:3px 3px 0 0;background:linear-gradient(#f8de4a,#e0bd22);box-shadow:inset 0 1px 0 #fbe98a;"></div>
<svg class="r" style="left:801.30px;top:587.70px;" width="13.00" height="11.00" viewBox="0 0 13 11"><path d="M2.5 0H10.5C12 0 13 1 13 2.5V5.5C13 7 12 8 10.5 8H5.5L3.5 10.5V8H2.5C1 8 0 7 0 5.5V2.5C0 1 1 0 2.5 0Z" fill="#e8913a"/></svg>
<div class="t" style="left:822.30px;top:587.00px;font-size:11.00px;color:#5f5418;transform:scaleX(0.9788);transform-origin:0 0;font-weight:bold;">Online</div>
<div class="t" style="left:861.00px;top:587.00px;font-size:10.50px;color:#5f5418;">-</div>
<div class="t" style="left:867.60px;top:587.00px;font-size:11.00px;color:#5f5418;transform:scaleX(0.9579);transform-origin:0 0;">Click here to chat</div>
</body></html>
